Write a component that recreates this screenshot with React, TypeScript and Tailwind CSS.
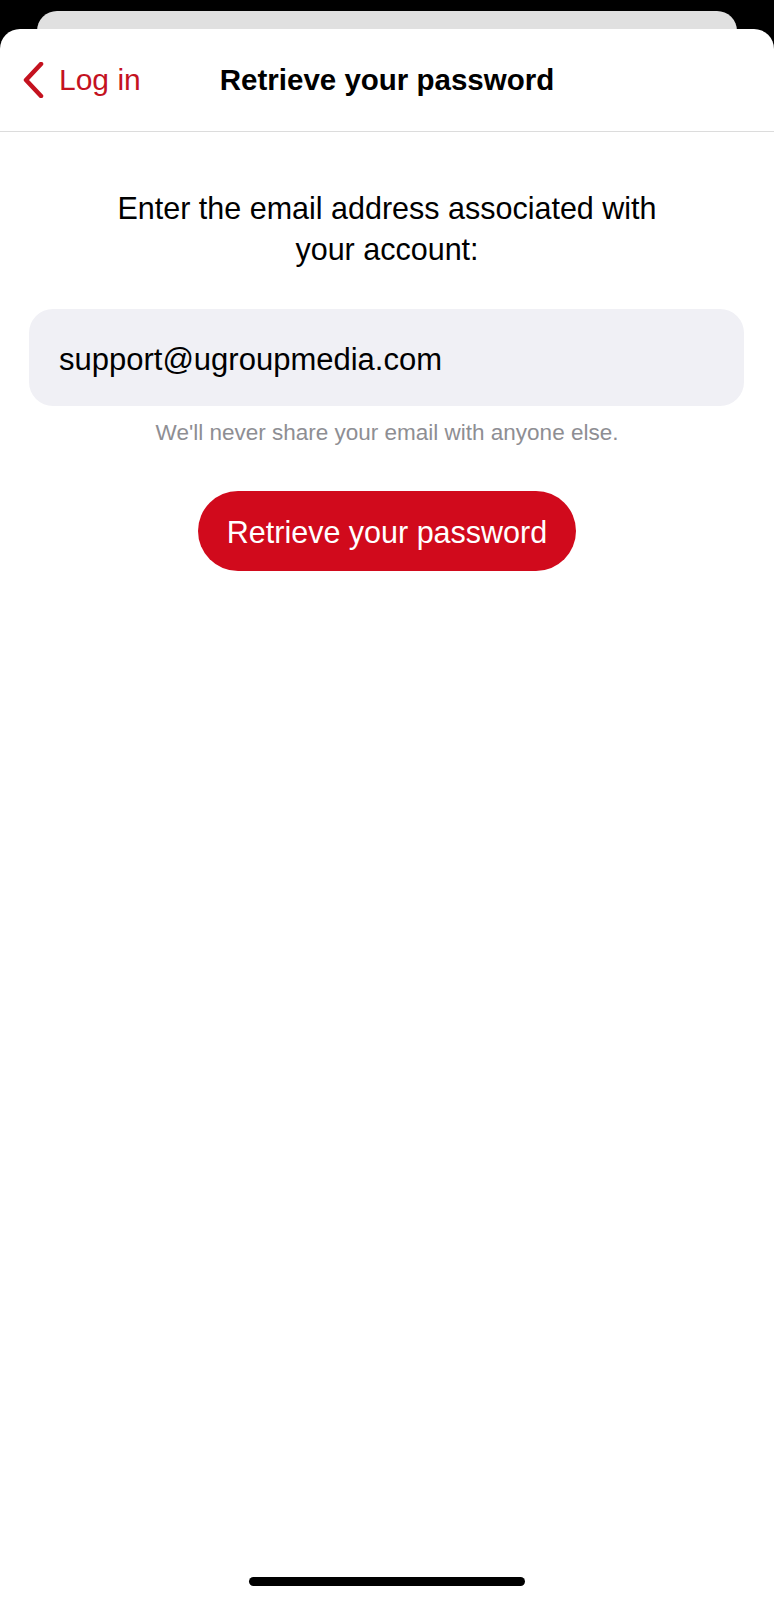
export default function App() {
  return (
    <div className="min-h-[1600px] bg-black flex flex-col font-['Liberation_Sans',Arial,sans-serif]">
      {/* stacked sheet behind */}
      <div className="mx-[37px] mt-[11px] h-[40px] -mb-[22px] rounded-t-[20px] bg-[#e0e0e0]" />

      <div className="relative flex-1 bg-white rounded-t-[20px] flex flex-col">
        <header className="relative h-[103px] flex items-center justify-center border-b border-[#dcdcdc]">
          <button className="absolute left-[22px] top-1/2 -translate-y-1/2 flex items-center gap-[15px] text-[#c4121f]">
            <svg width="22" height="36" viewBox="0 0 22 36" fill="none">
              <path d="M19 2 L4 18 L19 34" stroke="currentColor" strokeWidth="4.5" strokeLinecap="round" strokeLinejoin="round" />
            </svg>
            <span className="text-[30px] leading-none">Log in</span>
          </button>
          <h1 className="text-[29.5px] font-bold text-black leading-none">Retrieve your password</h1>
        </header>

        <div className="flex flex-col items-center pt-[56px]">
          <p className="text-[30.5px] leading-[41px] text-center text-black">
            Enter the email address associated with
            <br />
            your account:
          </p>

          <div className="self-stretch mx-[29px] mr-[30px] mt-[39px] h-[97px] rounded-[24px] bg-[#f0f0f5] flex items-center pl-[30px] pt-[5px]">
            <span className="text-[31px] text-black">support@ugroupmedia.com</span>
          </div>

          <p className="mt-[13px] text-[22.5px] leading-[28px] text-[#8e8e93]">
            We'll never share your email with anyone else.
          </p>

          <button className="mt-[44px] w-[378px] h-[80px] rounded-full bg-[#d10a1c] text-white text-[30.5px] pt-[3px]">
            Retrieve your password
          </button>
        </div>

        <div className="mt-auto mb-[14px] flex justify-center">
          <div className="w-[276px] h-[9px] rounded-full bg-black" />
        </div>
      </div>
    </div>
  );
}
